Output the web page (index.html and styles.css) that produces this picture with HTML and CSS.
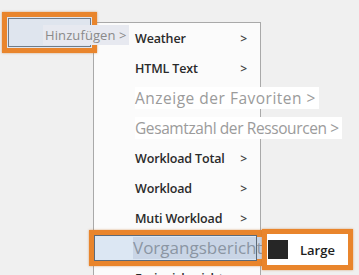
FILE: index.html
```html
<!DOCTYPE html>
<html>
<head>
<meta charset="utf-8">
<link rel="stylesheet" href="styles.css">
</head>
<body>
<div class="screen">
  <div class="menu">
    <div class="item"><span class="label">Weather</span><span class="arrow">&gt;</span></div>
    <div class="item"><span class="label">HTML Text</span><span class="arrow">&gt;</span></div>
    <div class="item faded"><span class="wide wide-loose">Anzeige der Favoriten &gt;</span></div>
    <div class="item faded"><span class="wide wide-tight">Gesamtzahl der Ressourcen &gt;</span></div>
    <div class="item"><span class="label">Workload Total</span><span class="arrow">&gt;</span></div>
    <div class="item"><span class="label">Workload</span><span class="arrow">&gt;</span></div>
    <div class="item"><span class="label">Muti Workload</span><span class="arrow">&gt;</span></div>
    <div class="item"><span class="label"></span></div>
    <div class="item"><span class="label">Ereignisbericht</span><span class="arrow">&gt;</span></div>
  </div>

  <div class="mark mark-add"></div>
  <div class="add-label">Hinzufügen &gt;</div>

  <div class="mark mark-report"><span class="report-text">Vorgangsbericht</span></div>
  <div class="mark mark-large"><span class="swatch"></span><span class="large-text">Large</span></div>
</div>
</body>
</html>
```
FILE: styles.css
```css
* { box-sizing: border-box; }
html, body {
  margin: 0;
  padding: 0;
  background: #f0f0f0;
  width: 359px;
  height: 275px;
  overflow: hidden;
}
.screen {
  position: relative;
  width: 359px;
  height: 275px;
  padding: 22px 0 0 93px;
  font-family: "Open Sans", "Noto Sans", sans-serif;
}
.menu {
  width: 168px;
  background: #fbfbfb;
  border: 1px solid #a9a9a9;
  border-bottom: none;
}
.item {
  height: 30px;
  display: flex;
  align-items: center;
  padding-left: 41px;
  padding-right: 13px;
  white-space: nowrap;
}
.label {
  flex: 1;
  font-size: 12.5px;
  font-weight: 600;
  color: #2a2a2a;
  letter-spacing: -0.15px;
}
.arrow {
  font-size: 12px;
  font-weight: 600;
  color: #444;
}
.faded .wide {
  background: #ffffff;
  color: #9b9b9b;
  font-size: 15.5px;
  padding-right: 3px;
  line-height: 22px;
}
.wide-loose { letter-spacing: 0.5px; }
.wide-tight { letter-spacing: -0.4px; }
.mark {
  position: absolute;
  border: 5px solid #e9852c;
  box-shadow: 0 0 2px rgba(200, 110, 30, 0.6);
}
.mark-add {
  left: 2px;
  top: 12px;
  width: 95px;
  height: 41px;
  background: #dfe5ee;
  outline: 1px solid #6e7c8a;
  outline-offset: -7px;
}
.add-label {
  position: absolute;
  left: 43px;
  top: 25px;
  height: 20px;
  padding: 0 2px 0 2px;
  background: #e7e9f0;
  color: #8a8a8a;
  font-size: 13px;
  line-height: 20px;
  letter-spacing: 0.1px;
  white-space: nowrap;
}
.mark-report {
  left: 89px;
  top: 230px;
  width: 173px;
  height: 36px;
  background: #dce7f3;
  outline: 1px solid #5d6a78;
  outline-offset: -6px;
  display: flex;
  align-items: center;
  padding-left: 39px;
}
.report-text {
  background: #c9d5e6;
  color: #8b95a3;
  font-size: 17px;
  line-height: 22px;
  white-space: nowrap;
  padding-right: 1px;
}
.mark-large {
  left: 262px;
  top: 229px;
  width: 91px;
  height: 41px;
  background: #ffffff;
  display: flex;
  align-items: center;
  padding-left: 1px;
}
.swatch {
  width: 20px;
  height: 19px;
  background: #262626;
  margin-right: 12px;
}
.large-text {
  font-size: 13px;
  font-weight: 600;
  color: #1e1e1e;
}
```
